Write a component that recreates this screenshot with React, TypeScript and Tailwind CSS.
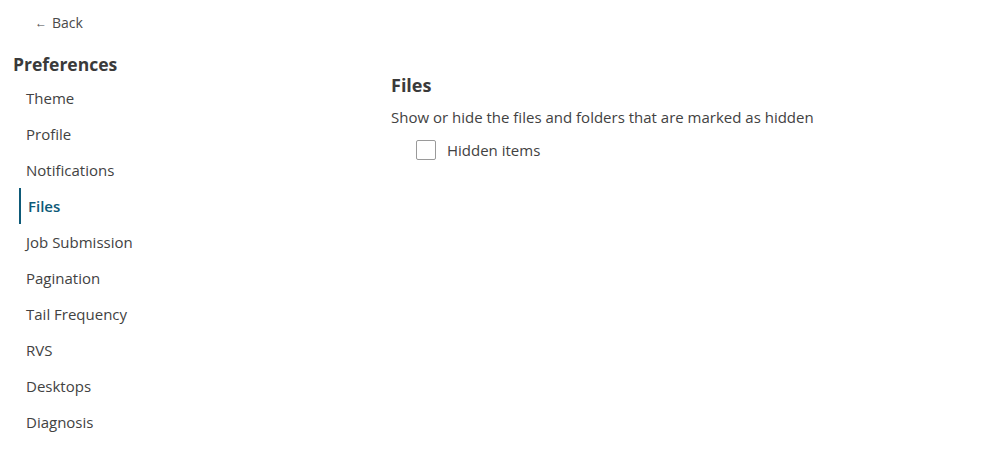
const items = [
  "Theme",
  "Profile",
  "Notifications",
  "Files",
  "Job Submission",
  "Pagination",
  "Tail Frequency",
  "RVS",
  "Desktops",
  "Diagnosis",
];

export default function App() {
  return (
    <div className="min-h-screen bg-white text-[#424242] font-['Open_Sans',sans-serif]">
      <div className="flex">
        <aside className="w-[391px] shrink-0 pl-[13px]">
          <a className="mt-[13px] ml-[22px] flex items-center gap-[5px] text-[14px] leading-[19px] text-[#4a4a4a]">
            <span className="text-[12px]">←</span>
            <span>Back</span>
          </a>
          <h2 className="mt-[20px] text-[17.5px] font-bold leading-[24px] text-[#3a3a3a]">Preferences</h2>
          <nav className="mt-[4px] flex flex-col">
            {items.map((item) => (
              <div
                key={item}
                className={
                  item === "Files"
                    ? "ml-[6px] flex h-[36px] items-center border-l-2 border-[#0e5a78] pl-[7px] text-[15px] font-semibold text-[#0e5a78]"
                    : "flex h-[36px] items-center pl-[13px] text-[15px]"
                }
              >
                {item}
              </div>
            ))}
          </nav>
        </aside>
        <main className="pt-[72px]">
          <h3 className="text-[18px] font-bold leading-[26px] text-[#3a3a3a]">Files</h3>
          <p className="mt-[9px] text-[15px] leading-[20px]">Show or hide the files and folders that are marked as hidden</p>
          <label className="mt-[12px] ml-[25px] flex items-center gap-[11px] text-[15px]">
            <span className="h-[20px] w-[20px] rounded-[2px] border border-[#9a9a9a] bg-white" />
            <span>Hidden items</span>
          </label>
        </main>
      </div>
    </div>
  );
}
